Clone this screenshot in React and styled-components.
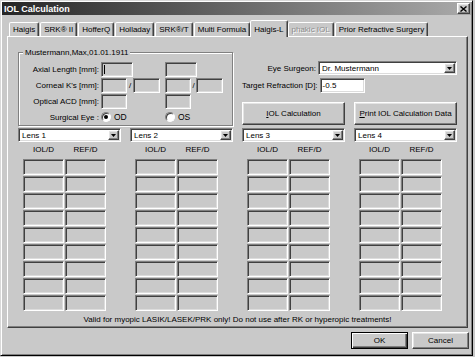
import React from "react";
import styled, { createGlobalStyle, css } from "styled-components";

const GlobalStyle = createGlobalStyle`
  html, body { margin: 0; padding: 0; background: #c9c9c9; }
  body {
    font-family: "Liberation Sans", Arial, sans-serif;
    font-size: 8px;
    color: #000;
  }
  * { box-sizing: border-box; }
`;

const sunken = css`
  border: 1px solid;
  border-color: #808080 #fff #fff #808080;
  box-shadow: inset 1px 1px 0 #404040, inset -1px -1px 0 #dcdcdc;
`;

const raised = css`
  border: 1px solid;
  border-color: #fff #404040 #404040 #fff;
  box-shadow: inset -1px -1px 0 #808080, inset 1px 1px 0 #e4e4e4;
`;

const Window = styled.div`
  width: 473px;
  height: 356px;
  background: #c9c9c9;
  border: 1px solid;
  border-color: #d8d8d8 #000 #000 #d8d8d8;
  box-shadow: inset 1px 1px 0 #fff, inset -1px -1px 0 #808080;
  padding: 1px;
  display: flex;
  flex-direction: column;
`;

const TitleBar = styled.div`
  height: 13px;
  display: flex;
  align-items: center;
  justify-content: space-between;
  padding: 0 1px 0 2px;
  background: linear-gradient(to right, #262626, #aaaaaa);
`;

const Title = styled.span`
  color: #fff;
  font-weight: bold;
  font-size: 9px;
`;

const CloseButton = styled.div`
  ${raised};
  width: 13px;
  height: 11px;
  background: #c9c9c9;
  display: flex;
  align-items: center;
  justify-content: center;
`;

const TabStrip = styled.div`
  display: flex;
  align-items: flex-end;
  height: 16px;
  margin-top: 5px;
  padding-left: 7px;
  gap: 1px;
`;

const Tab = styled.div`
  position: relative;
  height: ${(p) => (p.$active ? "17px" : "14px")};
  margin: ${(p) => (p.$active ? "0 -1px -1px" : "0")};
  z-index: ${(p) => (p.$active ? 2 : 1)};
  padding: 0 3px;
  display: flex;
  align-items: center;
  white-space: nowrap;
  background: #c9c9c9;
  border: 1px solid;
  border-bottom: none;
  border-color: #fff #404040 transparent #fff;
  border-radius: 2px 2px 0 0;
  box-shadow: inset -1px 0 0 #808080;
  color: ${(p) => (p.$disabled ? "#8c8c8c" : "#000")};
  text-shadow: ${(p) => (p.$disabled ? "1px 1px 0 #fff" : "none")};
`;

const Panel = styled.div`
  margin-left: 5px;
  width: 461px;
  height: 292px;
  border: 1px solid;
  border-color: #fff #404040 #404040 #fff;
  box-shadow: inset -1px -1px 0 #808080;
  padding: 11px 0 0 10px;
  display: flex;
  flex-direction: column;
`;

const FourCols = styled.div`
  display: grid;
  grid-template-columns: repeat(4, 103px);
  column-gap: 9px;
`;

const GroupBox = styled.div`
  position: relative;
  grid-column: 1 / 3;
  margin-top: 4px;
  padding: 9px 0 2px 0;
  border: 1px solid #808080;
  box-shadow: inset 1px 1px 0 #fff, 1px 1px 0 #fff;
`;

const GroupLabel = styled.span`
  position: absolute;
  top: -5px;
  left: 4px;
  padding: 0 2px;
  line-height: 9px;
  background: #c9c9c9;
`;

const EyeGrid = styled.div`
  display: grid;
  grid-template-columns: 80px 62px 58px;
  grid-template-rows: 15px 15px 15px 13px;
  column-gap: 2px;
  row-gap: 1px;
  & > :nth-last-child(-n + 3) {
    margin-top: 1px;
  }
`;

const FieldLabel = styled.span`
  align-self: center;
  text-align: right;
  white-space: nowrap;
`;

const Field = styled.div`
  ${sunken};
  width: ${(p) => p.$w}px;
  height: 15px;
  background: ${(p) => (p.$white ? "#fff" : "#c9c9c9")};
  display: flex;
  align-items: center;
  padding-left: 2px;
`;

const Caret = styled.span`
  width: 1px;
  height: 9px;
  background: #000;
`;

const KPair = styled.div`
  display: flex;
  align-items: center;
`;

const Slash = styled.span`
  width: 6px;
  text-align: center;
`;

const RadioOption = styled.label`
  display: flex;
  align-items: center;
  gap: 3px;
  font-size: 8.5px;
`;

const RadioCircle = styled.span`
  width: 10px;
  height: 10px;
  border-radius: 50%;
  background: #fff;
  border: 1px solid;
  border-color: #808080 #fff #fff #808080;
  box-shadow: inset 1px 1px 0 #404040;
  display: flex;
  align-items: center;
  justify-content: center;
  &::after {
    content: "";
    width: 4px;
    height: 4px;
    border-radius: 50%;
    background: ${(p) => (p.$checked ? "#000" : "transparent")};
  }
`;

const RightSection = styled.div`
  grid-column: 3 / 5;
  padding-top: 13px;
  display: flex;
  flex-direction: column;
`;

const FormRow = styled.div`
  display: flex;
  align-items: center;
  margin-top: ${(p) => p.$mt || 0}px;
`;

const RowLabel = styled.div`
  flex: 0 0 74px;
  margin-right: 2px;
  display: flex;
  justify-content: flex-end;
  white-space: nowrap;
`;

const ComboBox = styled.div`
  ${sunken};
  flex: ${(p) => (p.$grow ? 1 : "none")};
  height: 14px;
  background: #fff;
  display: flex;
  align-items: stretch;
  padding: 1px;
`;

const ComboText = styled.span`
  flex: 1;
  display: flex;
  align-items: center;
  padding-left: 2px;
  white-space: nowrap;
`;

const ComboArrow = styled.span`
  ${raised};
  width: 11px;
  background: #c9c9c9;
  display: flex;
  align-items: center;
  justify-content: center;
`;

const ButtonPair = styled.div`
  display: grid;
  grid-template-columns: 103px 103px;
  column-gap: 9px;
  margin-top: 9px;
`;

const PushButton = styled.div`
  ${raised};
  height: 23px;
  background: #c9c9c9;
  display: flex;
  align-items: center;
  justify-content: center;
  white-space: nowrap;
`;

const LensRow = styled(FourCols)`
  margin-top: 2px;
`;

const LensColumn = styled.div`
  display: flex;
  flex-direction: column;
`;

const ResultGrid = styled.div`
  display: grid;
  grid-template-columns: 41px 41px;
  grid-auto-rows: 16px;
  column-gap: 1px;
  row-gap: 1px;
  margin-left: 5px;
`;

const ColHead = styled.span`
  height: 15px;
  margin-bottom: -1px;
  display: flex;
  align-items: center;
  justify-content: center;
`;

const Cell = styled.div`
  ${sunken};
  background: #c9c9c9;
`;

const Note = styled.div`
  margin-top: 4px;
  padding-right: 10px;
  text-align: center;
  line-height: 9px;
  white-space: nowrap;
`;

const DialogButtons = styled.div`
  display: flex;
  justify-content: flex-end;
  gap: 4px;
  margin-top: 4px;
  padding-right: 2px;
`;

const DialogButton = styled.div`
  width: 57px;
  height: 17px;
  background: #c9c9c9;
  display: flex;
  align-items: center;
  justify-content: center;
  ${(p) =>
    p.$default
      ? css`
          border: 1px solid #000;
          box-shadow: inset 1px 1px 0 #fff, inset -1px -1px 0 #404040,
            inset -2px -2px 0 #808080;
        `
      : raised}
`;

const DownArrow = () => (
  <svg width="5" height="3" viewBox="0 0 5 3">
    <path d="M0 0h5L2.5 3z" fill="#000" />
  </svg>
);

const Combo = ({ text, grow }) => (
  <ComboBox $grow={grow}>
    <ComboText>{text}</ComboText>
    <ComboArrow>
      <DownArrow />
    </ComboArrow>
  </ComboBox>
);

const tabs = [
  { name: "Haigis" },
  { name: "SRK® II" },
  { name: "HofferQ" },
  { name: "Holladay" },
  { name: "SRK®/T" },
  { name: "Multi Formula" },
  { name: "Haigis-L", active: true },
  { name: "phakic IOL", disabled: true },
  { name: "Prior Refractive Surgery" },
];

const lenses = ["Lens 1", "Lens 2", "Lens 3", "Lens 4"];
const ROWS = 9;

export default function App() {
  return (
    <>
      <GlobalStyle />
      <Window>
        <TitleBar>
          <Title>IOL Calculation</Title>
          <CloseButton>
            <svg width="7" height="6" viewBox="0 0 7 6">
              <path d="M0.5 0.5L6.5 5.5M6.5 0.5L0.5 5.5" stroke="#000" strokeWidth="1.4" />
            </svg>
          </CloseButton>
        </TitleBar>

        <TabStrip>
          {tabs.map((t) => (
            <Tab key={t.name} $active={t.active} $disabled={t.disabled}>
              {t.name}
            </Tab>
          ))}
        </TabStrip>

        <Panel>
          <FourCols>
            <GroupBox>
              <GroupLabel>Mustermann,Max,01.01.1911</GroupLabel>
              <EyeGrid>
                <FieldLabel>Axial Length [mm]:</FieldLabel>
                <Field $w={32}>
                  <Caret />
                </Field>
                <Field $w={32} />

                <FieldLabel>Corneal K's [mm]:</FieldLabel>
                <KPair>
                  <Field $w={26} />
                  <Slash>/</Slash>
                  <Field $w={27} />
                </KPair>
                <KPair>
                  <Field $w={26} />
                  <Slash>/</Slash>
                  <Field $w={27} />
                </KPair>

                <FieldLabel>Optical ACD [mm]:</FieldLabel>
                <Field $w={26} />
                <Field $w={26} />

                <FieldLabel>Surgical Eye :</FieldLabel>
                <RadioOption>
                  <RadioCircle $checked />
                  OD
                </RadioOption>
                <RadioOption>
                  <RadioCircle />
                  OS
                </RadioOption>
              </EyeGrid>
            </GroupBox>

            <RightSection>
              <FormRow>
                <RowLabel>Eye Surgeon:</RowLabel>
                <Combo text="Dr. Mustermann" grow />
              </FormRow>
              <FormRow $mt={3}>
                <RowLabel>Target Refraction [D]:</RowLabel>
                <Field $w={45} $white>
                  -0.5
                </Field>
              </FormRow>
              <ButtonPair>
                <PushButton>
                  <u>I</u>OL Calculation
                </PushButton>
                <PushButton>
                  <u>P</u>rint IOL Calculation Data
                </PushButton>
              </ButtonPair>
            </RightSection>
          </FourCols>

          <LensRow>
            {lenses.map((lens) => (
              <LensColumn key={lens}>
                <Combo text={lens} />
                <ResultGrid>
                  <ColHead>IOL/D</ColHead>
                  <ColHead>REF/D</ColHead>
                  {Array.from({ length: ROWS * 2 }, (_, i) => (
                    <Cell key={i} />
                  ))}
                </ResultGrid>
              </LensColumn>
            ))}
          </LensRow>

          <Note>
            Valid for myopic LASIK/LASEK/PRK only! Do not use after RK or hyperopic treatments!
          </Note>
        </Panel>

        <DialogButtons>
          <DialogButton $default>OK</DialogButton>
          <DialogButton>Cancel</DialogButton>
        </DialogButtons>
      </Window>
    </>
  );
}
